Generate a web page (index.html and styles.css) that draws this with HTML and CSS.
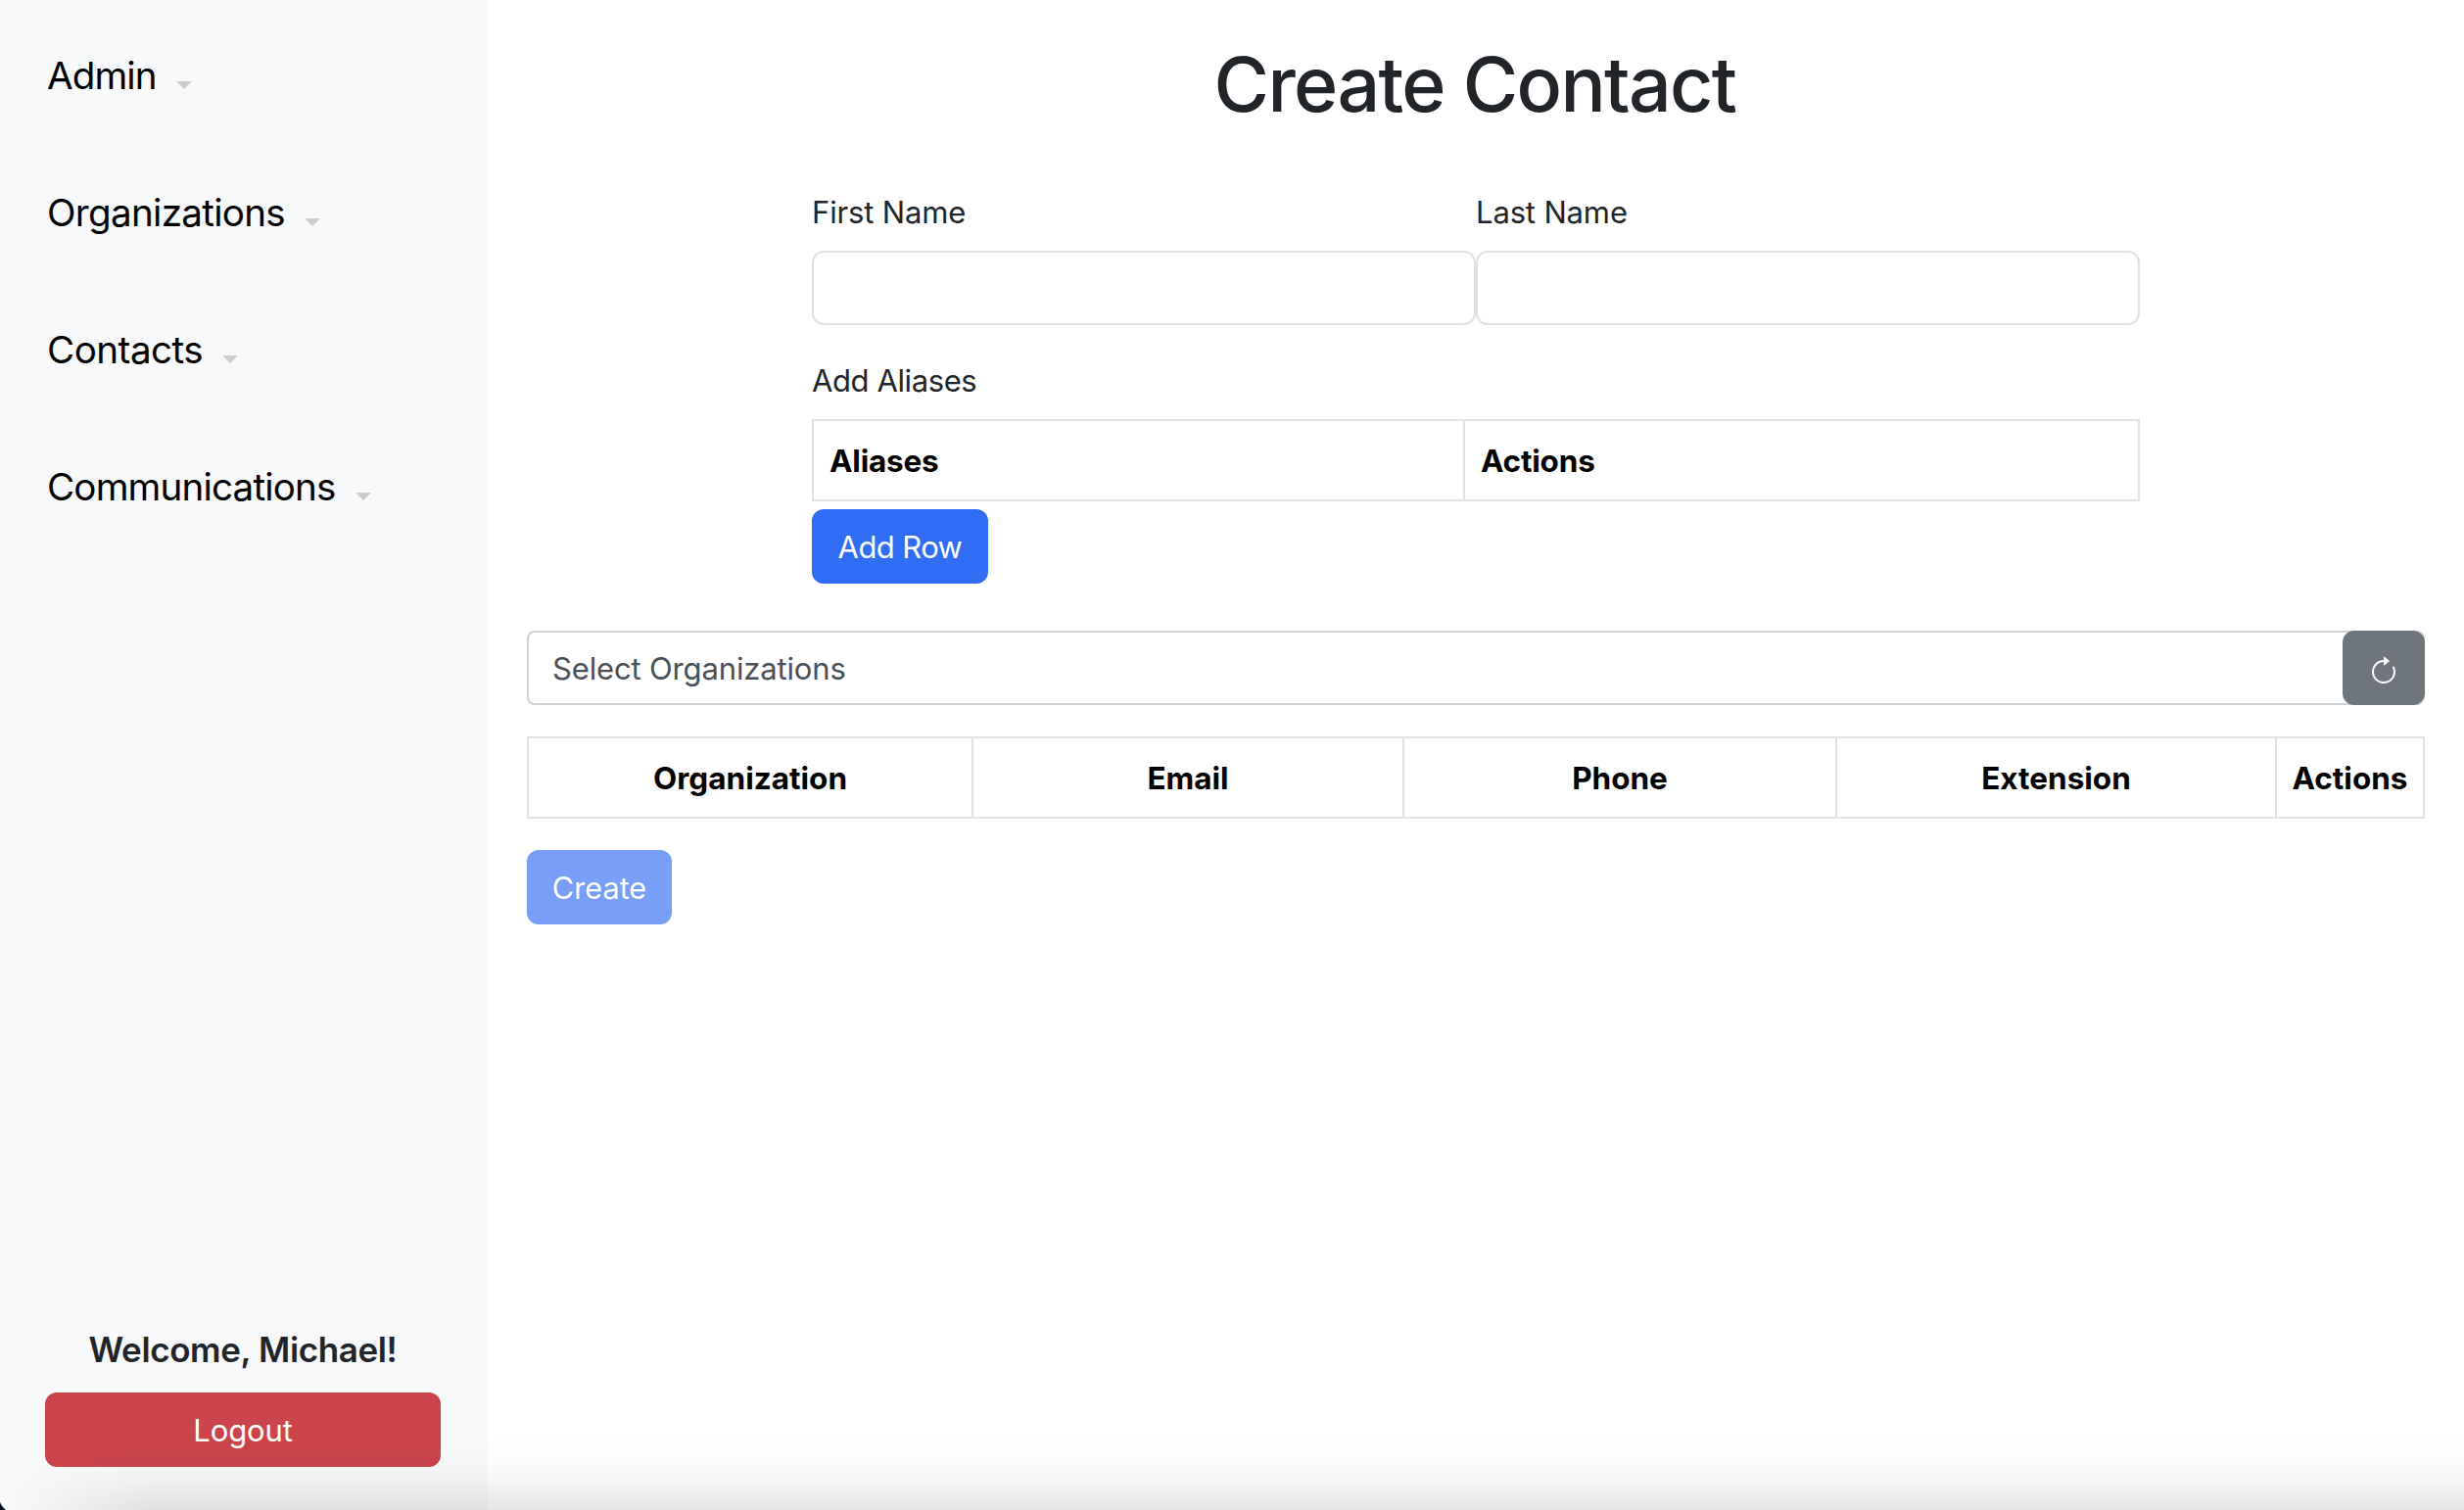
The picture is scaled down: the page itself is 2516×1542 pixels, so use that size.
FILE: index.html
```html
<!DOCTYPE html>
<html lang="en">
<head>
<meta charset="utf-8">
<title>Create Contact</title>
<link rel="stylesheet" href="styles.css">
</head>
<body>
<div class="app">
  <nav class="sidebar">
    <ul class="menu">
      <li class="menu-item menu-admin"><span>Admin</span><i class="caret"></i></li>
      <li class="menu-item menu-orgs"><span>Organizations</span><i class="caret"></i></li>
      <li class="menu-item menu-contacts"><span>Contacts</span><i class="caret"></i></li>
      <li class="menu-item menu-comms"><span>Communications</span><i class="caret"></i></li>
    </ul>
    <div class="account">
      <h5 class="welcome">Welcome, Michael!</h5>
      <button class="btn btn-danger">Logout</button>
    </div>
  </nav>
  <main class="main">
    <h1 class="title">Create Contact</h1>
    <section class="details">
      <div class="names">
        <div class="field">
          <label class="label" for="first">First Name</label>
          <input class="input" id="first" type="text">
        </div>
        <div class="field">
          <label class="label" for="last">Last Name</label>
          <input class="input" id="last" type="text">
        </div>
      </div>
      <div class="aliases">
        <div class="label label-aliases">Add Aliases</div>
        <div class="table alias-table">
          <div class="th">Aliases</div>
          <div class="th">Actions</div>
        </div>
        <button class="btn btn-primary btn-add">Add Row</button>
      </div>
    </section>
    <div class="picker">
      <div class="picker-text">Select Organizations</div>
      <button class="btn btn-reset" aria-label="Reset">
        <svg class="icon" viewBox="0 0 16 16">
          <path fill-rule="evenodd" d="M8 3a5 5 0 1 0 4.546 2.914.5.5 0 0 1 .908-.417A6 6 0 1 1 8 2z"/>
          <path d="M8 4.466V.534a.25.25 0 0 1 .41-.192l2.36 1.966c.12.1.12.284 0 .384L8.41 4.658A.25.25 0 0 1 8 4.466"/>
        </svg>
      </button>
    </div>
    <div class="table org-table">
      <div class="th">Organization</div>
      <div class="th">Email</div>
      <div class="th">Phone</div>
      <div class="th">Extension</div>
      <div class="th">Actions</div>
    </div>
    <button class="btn btn-primary btn-create" disabled>Create</button>
  </main>
</div>
<div class="edge-shadow"></div>
<div class="corner"></div>
</body>
</html>
```

FILE: styles.css
```css
* { box-sizing: border-box; }

body {
  margin: 0;
  background: #fff;
  color: #212529;
  font-family: Inter, "Liberation Sans", sans-serif;
  font-size: 31px;
  line-height: 48px;
  letter-spacing: -.15px;
}

.app { display: flex; height: 1542px; overflow: hidden; }

.sidebar {
  display: flex;
  flex-direction: column;
  justify-content: space-between;
  flex: 0 0 498px;
  padding: 47px 48px 44px 46px;
  background: #f8f9fb;
}

.menu {
  display: flex;
  flex-direction: column;
  gap: 80px;
  margin: 0;
  padding: 0 2px;
  list-style: none;
}

.menu-item {
  display: flex;
  align-items: center;
  gap: 20px;
  height: 60px;
  color: #000;
  font-size: 38.6px;
  line-height: 60px;
}

.menu-admin { letter-spacing: -.9px; }
.menu-orgs { letter-spacing: -.7px; }
.menu-contacts { letter-spacing: -.5px; }
.menu-comms { letter-spacing: -.83px; }

.caret {
  margin-top: 19px;
  border: 8px solid transparent;
  border-top-color: #ccc;
  border-bottom-width: 0;
}

.account { display: flex; flex-direction: column; }

.welcome {
  margin: 0 0 20px;
  font-size: 35px;
  font-weight: 600;
  line-height: 48px;
  letter-spacing: -.38px;
  text-align: center;
}

.btn {
  height: 76px;
  padding: 2px 0 0;
  border: 0;
  border-radius: 12px;
  color: #fff;
  font: inherit;
  letter-spacing: -.15px;
}

.btn-danger { background: #cb444a; }
.btn-primary { background: #316cf4; }
.btn-add { width: 180px; letter-spacing: -.6px; }

.main { flex: 1; min-width: 0; padding: 38px 40px 0; }

.title {
  margin: 0;
  padding-right: 2px;
  font-size: 77px;
  font-weight: 500;
  line-height: 96px;
  letter-spacing: -1.65px;
  text-align: center;
}

.details { width: 1356px; margin: 58px auto 0; }
.names { display: grid; grid-template-columns: 1fr 1fr; }
.label { display: block; height: 48px; margin-bottom: 16px; padding-top: 1px; }
.label-aliases { letter-spacing: -.4px; }

.input {
  display: block;
  width: 100%;
  height: 76px;
  border: 2px solid #dee2e6;
  border-radius: 12px;
  background: #fff;
}

.aliases { margin-top: 32px; }

.table {
  display: grid;
  height: 84px;
  border: 2px solid #dee2e6;
  color: #000;
  font-size: 31.5px;
  font-weight: 700;
  letter-spacing: 0;
}

.th { min-width: 0; padding-top: 17px; white-space: nowrap; }
.th + .th { border-left: 2px solid #dee2e6; }

.alias-table { grid-template-columns: 663px 1fr; margin-bottom: 8px; letter-spacing: -.2px; }
.alias-table .th { padding-left: 16px; }

.org-table {
  grid-template-columns: 452px 440px 442px 449px 1fr;
  margin-top: 32px;
  text-align: center;
}

.picker {
  display: flex;
  height: 76px;
  margin-top: 48px;
  border: 2px solid #ced4da;
  border-radius: 8px;
}

.picker-text { flex: 1; padding: 13px 24px; color: #495057; }
.btn-reset { width: 84px; margin: -2px; background: #6e757c; }
.icon { display: block; width: 32px; height: 32px; margin: 5px auto 0; fill: #fff; }
.btn-create { display: block; width: 148px; margin-top: 32px; opacity: .65; }

.edge-shadow {
  position: absolute;
  left: 0;
  right: 0;
  bottom: 0;
  height: 78px;
  background: linear-gradient(rgba(0,0,0,0), rgba(0,0,0,.012) 35%, rgba(0,0,0,.04) 65%, rgba(0,0,0,.1));
  -webkit-mask-image: linear-gradient(75deg, transparent 10px, #000 160px);
  mask-image: linear-gradient(75deg, transparent 10px, #000 160px);
  pointer-events: none;
}

.corner {
  position: absolute;
  left: 0;
  bottom: 0;
  width: 7px;
  height: 9px;
  background: radial-gradient(circle at 18.5px -6.6px, transparent 19.5px, #061018 20.5px);
}
```
